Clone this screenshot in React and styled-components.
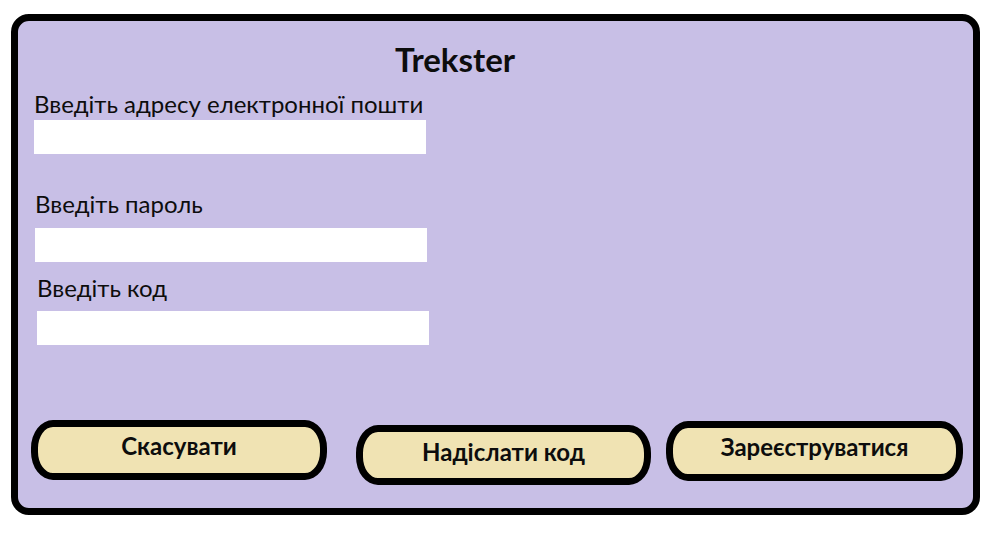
import React from 'react';
import styled, {createGlobalStyle} from 'styled-components';

const GlobalStyle = createGlobalStyle`
  html, body {
    margin: 0;
    padding: 0;
    background: #FFFFFF;
  }
  * {
    box-sizing: border-box;
  }
`;

const fields = [
    {label: 'Введіть адресу електронної пошти', gap: 0, top: 0, shift: 0},
    {label: 'Введіть пароль', gap: 8, top: 40, shift: 1},
    {label: 'Введіть код', gap: 7, top: 16, shift: 3},
];

const buttons = [
    {text: 'Скасувати', top: 0, left: 0, width: 296, dy: -5},
    {text: 'Надіслати код', top: 5, left: 29, width: 295, dy: -4},
    {text: 'Зареєструватися', top: 1, left: 15, width: 297, dy: -5},
];

const App = () => (
    <Page>
        <GlobalStyle/>
        <Panel>
            <Title>Trekster</Title>

            <Form>
                {fields.map(field => (
                    <Field key={field.label} $top={field.top} $shift={field.shift}>
                        <Label>{field.label}</Label>
                        <Input type="text" $gap={field.gap}/>
                    </Field>
                ))}
            </Form>

            <Actions>
                {buttons.map(button => (
                    <Button key={button.text} $top={button.top} $left={button.left} $width={button.width}>
                        <ButtonText $dy={button.dy}>{button.text}</ButtonText>
                    </Button>
                ))}
            </Actions>
        </Panel>
    </Page>
);

const Page = styled.div`
  width: 1008px;
  height: 543px;
  padding: 14px 0 0 11px;
  font-family: Lato, "Liberation Sans", sans-serif;
  color: #0D0D0D;
`;

const Panel = styled.div`
  display: flex;
  flex-direction: column;
  width: 969px;
  height: 501px;
  padding: 20px 10px 0 13px;
  background: #C8BFE6;
  border: 7px solid #000000;
  border-radius: 18px;
`;

const Title = styled.div`
  width: 874px;
  margin-left: -13px;
  text-align: center;
  font-weight: 700;
  font-size: 33px;
  line-height: 36px;
  color: #0D0D0D;
`;

const Form = styled.div`
  display: flex;
  flex-direction: column;
  padding-left: 3px;
  margin-top: 17px;
`;

const Field = styled.div`
  display: flex;
  flex-direction: column;
  margin-top: ${p => p.$top}px;
  margin-left: ${p => p.$shift}px;
`;

const Label = styled.div`
  font-size: 24px;
  line-height: 20px;
  padding-bottom: 6px;
  white-space: nowrap;
`;

const Input = styled.input`
  width: 392px;
  height: 34px;
  margin-top: ${p => p.$gap}px;
  border: none;
  outline: none;
  background: #FFFFFF;
`;

const Actions = styled.div`
  display: flex;
  align-items: flex-start;
  margin-top: auto;
  margin-bottom: 23px;
`;

const Button = styled.button`
  display: flex;
  align-items: center;
  justify-content: center;
  width: ${p => p.$width}px;
  height: 60px;
  margin-top: ${p => p.$top}px;
  margin-left: ${p => p.$left}px;
  padding: 0;
  background: #F0E3B3;
  border: 7px solid #000000;
  border-radius: 22px / 28px;
  font-family: Lato, "Liberation Sans", sans-serif;
  font-weight: 700;
  font-size: 24px;
  color: #0D0D0D;
  cursor: pointer;
`;

const ButtonText = styled.span`
  position: relative;
  top: ${p => p.$dy}px;
`;

export default App;
